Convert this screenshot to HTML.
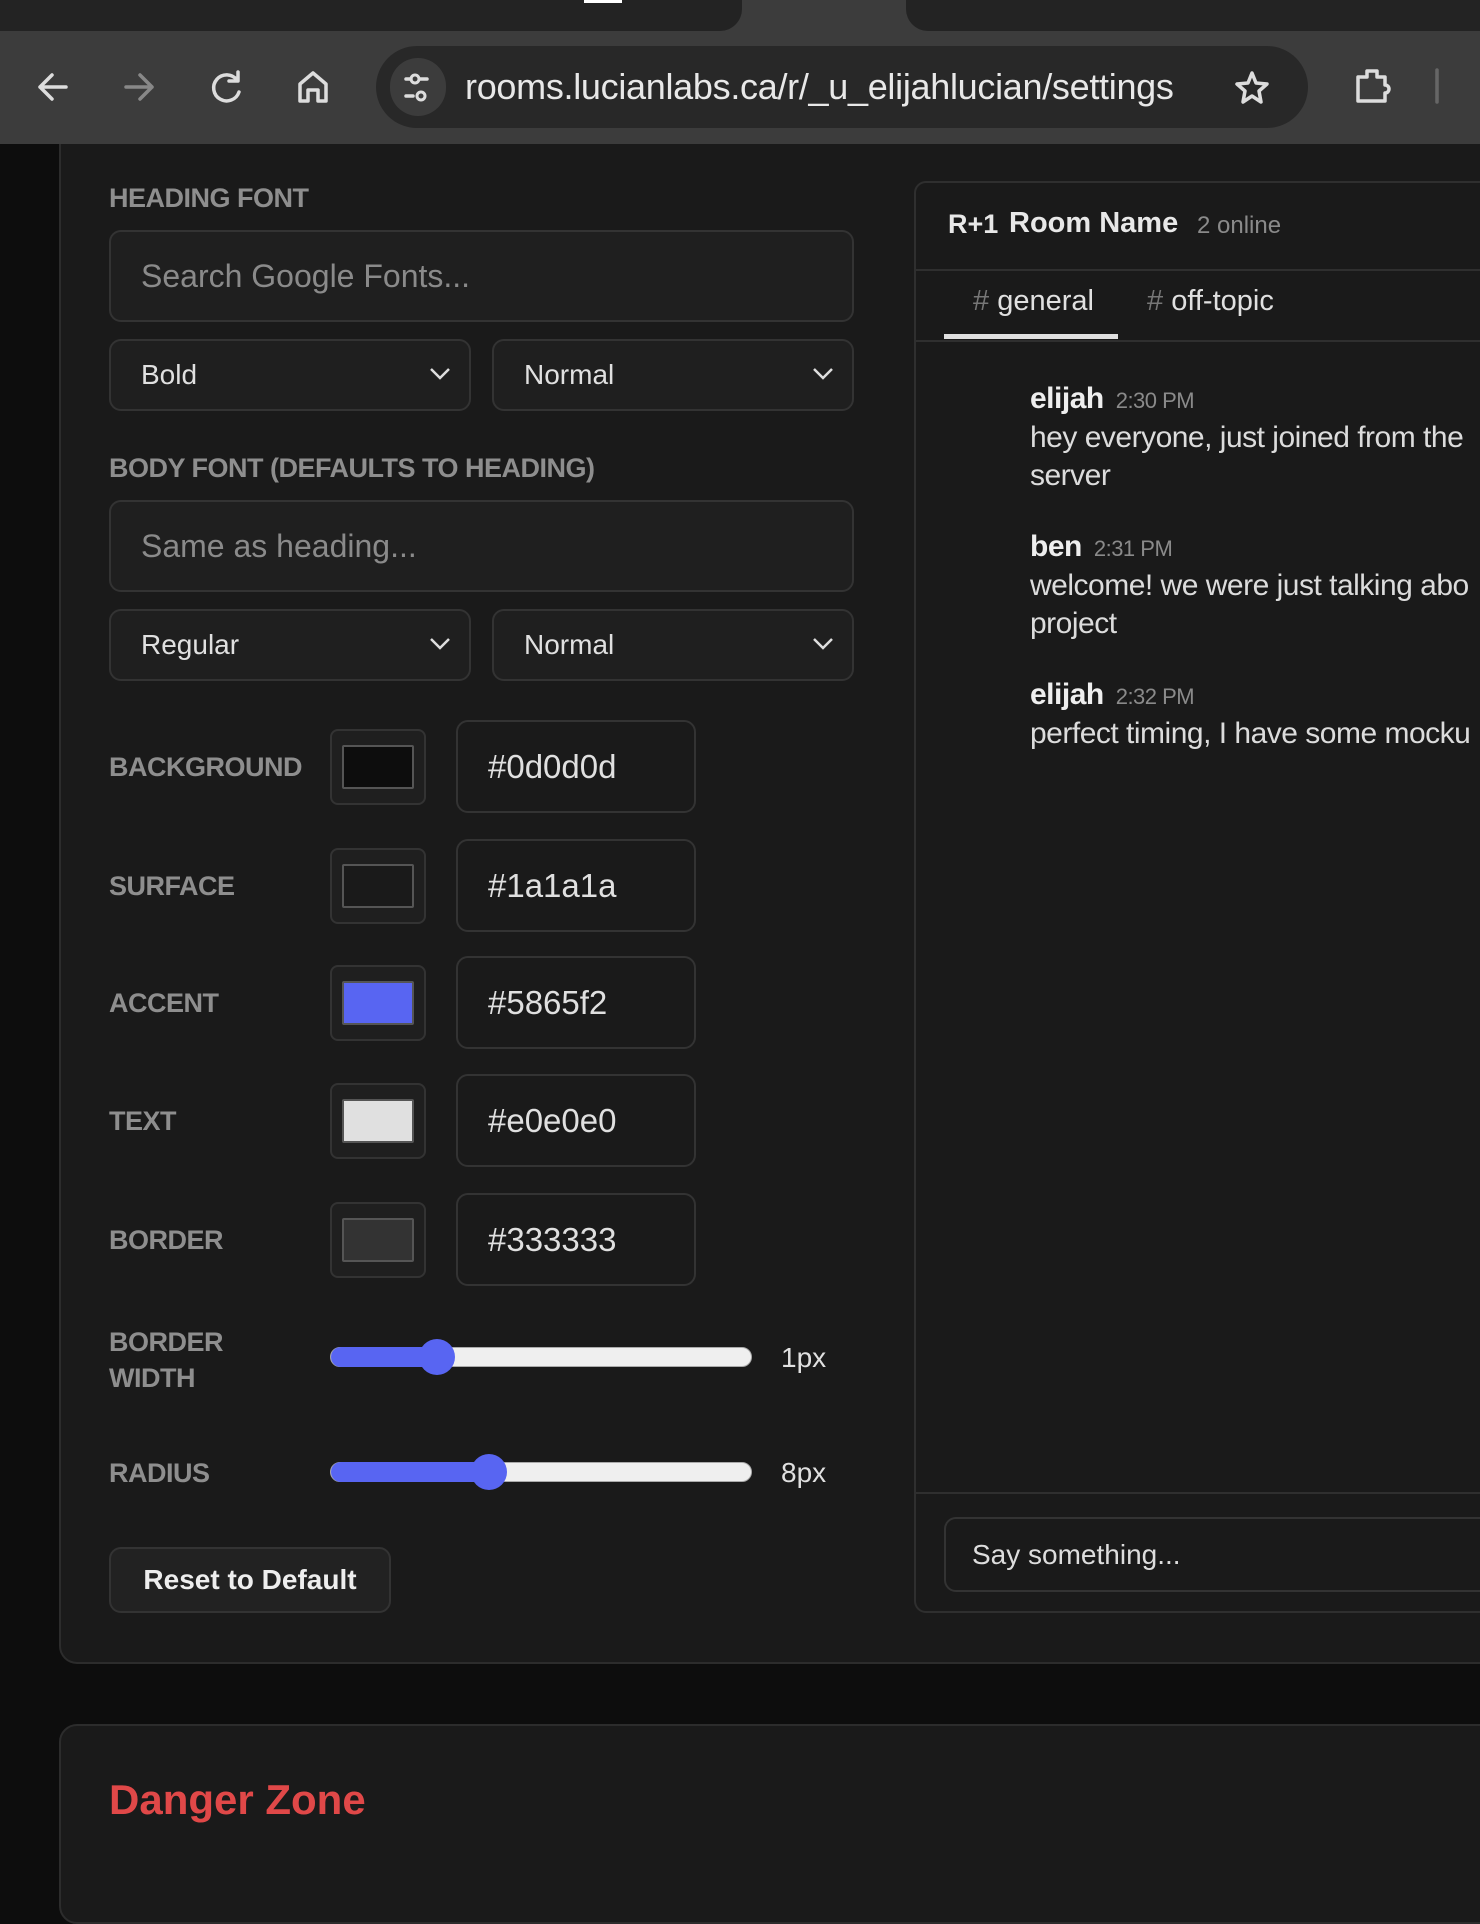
<!DOCTYPE html>
<html><head><meta charset="utf-8"><style>
*{box-sizing:border-box;margin:0;padding:0}
body{width:1480px;height:1857px;overflow:hidden;background:#0d0d0d;font-family:"Liberation Sans",sans-serif;color:#e0e0e0;position:relative}
.abs{position:absolute}
.lbl{position:absolute;left:109px;font-size:27px;font-weight:bold;color:#8e8e8e;letter-spacing:-0.5px}
.inp{position:absolute;left:109px;width:745px;height:92px;background:#1f1f1f;border:2px solid #333;border-radius:12px;font-size:32px;color:#8a8a8a;padding:0 30px;line-height:88px}
.sel{position:absolute;height:72px;background:#1f1f1f;border:2px solid #333;border-radius:12px;font-size:28px;color:#e0e0e0;padding-left:30px;line-height:68px}
.sel svg{position:absolute;right:18px;top:26px}
.sw{position:absolute;left:330px;width:96px;height:76px;background:#1f1f1f;border:2px solid #333;border-radius:8px}
.sw i{position:absolute;left:10px;top:14px;width:72px;height:44px;border:2px solid #555;border-radius:2px}
.hx{position:absolute;left:456px;width:240px;height:93px;background:#1a1a1a;border:2px solid #333;border-radius:12px;font-size:33px;color:#e0e0e0;padding-left:30px;line-height:89px}
.track{position:absolute;left:330px;width:422px;height:20px;border-radius:10px;background:#efefef;border:1px solid #aaa}
.fill{position:absolute;left:0;top:-1px;height:20px;background:#5865f2;border-radius:10px 0 0 10px}
.thumb{position:absolute;top:-9px;width:36px;height:36px;border-radius:50%;background:#5865f2}
.ml{position:absolute;left:1030px;font-size:30px;color:#dcdcdc;white-space:nowrap;line-height:36px;letter-spacing:-0.5px}
.ml b{color:#eee;font-size:30px}
.ml small{font-size:22px;color:#8a8a8a;margin-left:12px}
</style></head><body>
<!-- browser chrome -->
<div class="abs" style="left:0;top:0;width:1480px;height:144px;background:#3c3c3c"></div>
<div class="abs" style="left:0;top:0;width:742px;height:31px;background:#232323;border-radius:0 0 22px 0"></div>
<div class="abs" style="left:906px;top:0;width:574px;height:31px;background:#232323;border-radius:0 0 0 22px"></div>
<div class="abs" style="left:584px;top:0;width:38px;height:3px;background:#fff"></div>
<div class="abs" style="left:376px;top:46px;width:932px;height:82px;background:#282828;border-radius:41px"></div>
<div class="abs" style="left:390px;top:58px;width:56px;height:58px;background:#3c3c3c;border-radius:29px"></div>
<div class="abs" style="left:465px;top:66px;font-size:36px;color:#e8e8e8;letter-spacing:-0.3px">rooms.lucianlabs.ca/r/_u_elijahlucian/settings</div>
<svg class="abs" style="left:0;top:60px" width="1480" height="50" viewBox="0 60 1480 50">
<g fill="none" stroke="#ddd" stroke-width="3.5" stroke-linecap="round" stroke-linejoin="round">
<path d="M66 87H40M52 75L40 87L52 99"/>
<path d="M126 87H152M140 75L152 87L140 99" stroke="#888"/>
<path d="M237 80A13 13 0 1 0 239 92M238 72V81H229"/>
<path d="M300 101V84L313 73L326 84V101H318V90H308V101Z"/>
<path d="M1252 73L1256 83L1267 84L1259 91L1261 102L1252 96L1243 102L1245 91L1237 84L1248 83Z"/>
<path d="M1358 77H1367V71H1377V77H1385V85A4 4 0 0 1 1385 93V101H1358Z"/>
<path d="M1437 70V102" stroke="#666"/>
<path d="M406 79H411M420 79H427M406 96H413"/>
</g>
<g fill="none" stroke="#ddd" stroke-width="3"><circle cx="415" cy="79" r="4"/><circle cx="421" cy="96" r="4"/></g>
</svg>
<!-- settings card -->
<div class="abs" style="left:59px;top:144px;width:1500px;height:1520px;background:#1a1a1a;border:2px solid #2c2c2c;border-top:none;border-radius:0 0 0 18px"></div>
<div class="lbl" style="top:183px">HEADING FONT</div>
<div class="inp" style="top:230px">Search Google Fonts...</div>
<div class="sel" style="left:109px;top:339px;width:362px">Bold<svg width="22" height="14"><path d="M2 2L11 11L20 2" fill="none" stroke="#ddd" stroke-width="2.5"/></svg></div>
<div class="sel" style="left:492px;top:339px;width:362px">Normal<svg width="22" height="14"><path d="M2 2L11 11L20 2" fill="none" stroke="#ddd" stroke-width="2.5"/></svg></div>
<div class="lbl" style="top:453px">BODY FONT (DEFAULTS TO HEADING)</div>
<div class="inp" style="top:500px">Same as heading...</div>
<div class="sel" style="left:109px;top:609px;width:362px">Regular<svg width="22" height="14"><path d="M2 2L11 11L20 2" fill="none" stroke="#ddd" stroke-width="2.5"/></svg></div>
<div class="sel" style="left:492px;top:609px;width:362px">Normal<svg width="22" height="14"><path d="M2 2L11 11L20 2" fill="none" stroke="#ddd" stroke-width="2.5"/></svg></div>

<div class="lbl" style="top:752px">BACKGROUND</div>
<div class="sw" style="top:729px"><i style="background:#0d0d0d"></i></div>
<div class="hx" style="top:720px">#0d0d0d</div>
<div class="lbl" style="top:871px">SURFACE</div>
<div class="sw" style="top:848px"><i style="background:#1a1a1a"></i></div>
<div class="hx" style="top:839px">#1a1a1a</div>
<div class="lbl" style="top:988px">ACCENT</div>
<div class="sw" style="top:965px"><i style="background:#5865f2"></i></div>
<div class="hx" style="top:956px">#5865f2</div>
<div class="lbl" style="top:1106px">TEXT</div>
<div class="sw" style="top:1083px"><i style="background:#e0e0e0"></i></div>
<div class="hx" style="top:1074px">#e0e0e0</div>
<div class="lbl" style="top:1225px">BORDER</div>
<div class="sw" style="top:1202px"><i style="background:#333"></i></div>
<div class="hx" style="top:1193px">#333333</div>

<div class="lbl" style="top:1324px;line-height:36px">BORDER<br>WIDTH</div>
<div class="track" style="top:1347px"><div class="fill" style="width:110px"></div><div class="thumb" style="left:88px"></div></div>
<div class="abs" style="left:781px;top:1342px;font-size:28px">1px</div>
<div class="lbl" style="top:1458px">RADIUS</div>
<div class="track" style="top:1462px"><div class="fill" style="width:160px"></div><div class="thumb" style="left:140px"></div></div>
<div class="abs" style="left:781px;top:1457px;font-size:28px">8px</div>
<div class="abs" style="left:109px;top:1547px;width:282px;height:66px;background:#222;border:2px solid #333;border-radius:12px;font-size:28px;font-weight:bold;color:#eee;text-align:center;line-height:62px">Reset to Default</div>

<!-- chat preview -->
<div class="abs" style="left:914px;top:181px;width:600px;height:1432px;background:#1a1a1a;border:2px solid #2f2f2f;border-radius:12px"></div>
<div class="abs" style="left:914px;top:269px;width:566px;height:2px;background:#2f2f2f"></div>
<div class="abs" style="left:914px;top:340px;width:566px;height:2px;background:#2f2f2f"></div>
<div class="abs" style="left:948px;top:209px;font-size:27px;font-weight:bold;color:#e8e8e8">R+1</div>
<div class="abs" style="left:1009px;top:207px;font-size:29px;font-weight:bold;color:#e8e8e8">Room Name</div>
<div class="abs" style="left:1197px;top:212px;font-size:24px;color:#8a8a8a">2 online</div>
<div class="abs" style="left:973px;top:285px;font-size:29px;color:#e0e0e0"><span style="color:#777">#</span> general</div>
<div class="abs" style="left:1147px;top:285px;font-size:29px;color:#e0e0e0"><span style="color:#777">#</span> off-topic</div>
<div class="abs" style="left:944px;top:334px;width:174px;height:5px;background:#e0e0e0"></div>
<div class="ml" style="top:381px"><b>elijah</b><small>2:30 PM</small></div>
<div class="ml" style="top:420px">hey everyone, just joined from the</div>
<div class="ml" style="top:458px">server</div>
<div class="ml" style="top:529px"><b>ben</b><small>2:31 PM</small></div>
<div class="ml" style="top:568px">welcome! we were just talking abo</div>
<div class="ml" style="top:606px">project</div>
<div class="ml" style="top:677px"><b>elijah</b><small>2:32 PM</small></div>
<div class="ml" style="top:716px">perfect timing, I have some mocku</div>
<div class="abs" style="left:914px;top:1492px;width:566px;height:2px;background:#2f2f2f"></div>
<div class="abs" style="left:944px;top:1517px;width:600px;height:75px;background:#1a1a1a;border:2px solid #333;border-radius:12px;font-size:28px;color:#ddd;padding-left:26px;line-height:71px">Say something...</div>

<!-- danger zone -->
<div class="abs" style="left:59px;top:1724px;width:1500px;height:200px;background:#1a1a1a;border:2px solid #2c2c2c;border-radius:18px"></div>
<div class="abs" style="left:109px;top:1776px;font-size:42px;font-weight:bold;color:#e04848">Danger Zone</div>
</body></html>
